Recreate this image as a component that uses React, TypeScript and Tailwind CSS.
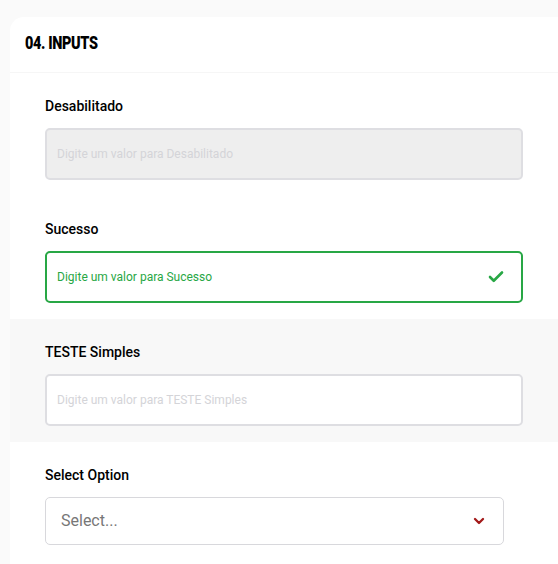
import { Check, ChevronDown } from "lucide-react";

const font = { fontFamily: "Roboto, 'Liberation Sans', sans-serif" };

function Field({ label, children, gray }: { label: string; children: React.ReactNode; gray?: boolean }) {
  return (
    <div className={`pl-[35px] pr-[35px] pt-[23px] pb-[16px] ${gray ? "bg-[#f8f8f8]" : "bg-white"}`}>
      <label className="block h-5 text-[14px] leading-5 font-medium text-black">{label}</label>
      <div className="mt-[12px]">{children}</div>
    </div>
  );
}

export default function App() {
  return (
    <div className="min-h-[564px] w-[558px] bg-[#fafafa] pl-[10px]" style={font}>
      {/* header */}
      <div className="pt-[17px]">
        <div className="h-[56px] rounded-tl-[14px] bg-white flex items-center border-b border-[#f6f6f6]">
          <h2 className="ml-[15px] -mt-[2px] origin-left scale-x-[0.76] text-[19px] font-black tracking-tight text-black">
            04. INPUTS
          </h2>
        </div>
      </div>

      <Field label="Desabilitado">
        <div className="h-[52px] rounded-[5px] border-2 border-[#dedee2] bg-[#eeeeee] flex items-center px-[10px] text-[12px] text-[#d4d4d8]">
          Digite um valor para Desabilitado
        </div>
      </Field>

      <Field label="Sucesso">
        <div className="h-[52px] rounded-[5px] border-2 border-[#28a745] bg-white flex items-center justify-between pl-[10px] pr-[16px] text-[12px] text-[#28a745]">
          <span>Digite um valor para Sucesso</span>
          <Check size={18} strokeWidth={3.5} className="text-[#28a745]" />
        </div>
      </Field>

      <Field label="TESTE Simples" gray>
        <div className="h-[52px] rounded-[5px] border-2 border-[#dedee2] bg-white flex items-center px-[10px] text-[12px] text-[#d4d4d8]">
          Digite um valor para TESTE Simples
        </div>
      </Field>

      <div className="bg-white pl-[35px] pt-[23px] pb-[19px]">
        <label className="block h-5 text-[14px] leading-5 font-medium text-black">Select Option</label>
        <div className="mt-[12px] w-[459px] h-[48px] rounded-[5px] border border-[#d8d8dc] bg-white flex items-center justify-between pl-[15px] pr-[16px]">
          <span className="text-[16px] text-[#777777]">Select...</span>
          <ChevronDown size={16} strokeWidth={3.5} className="text-[#a31a1a]" />
        </div>
      </div>
    </div>
  );
}
